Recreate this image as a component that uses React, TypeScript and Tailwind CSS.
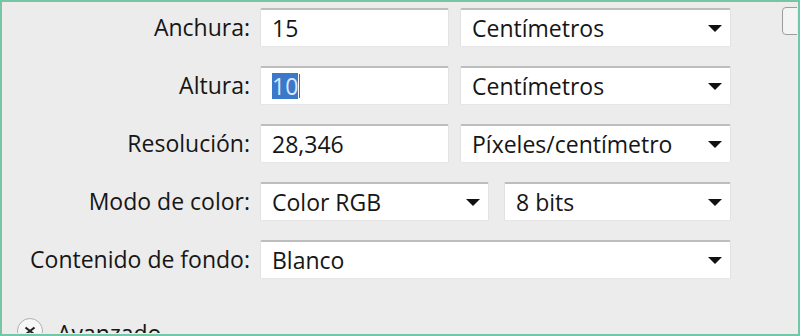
import React from "react";

const font = { fontFamily: '"Open Sans", "Noto Sans", sans-serif' };

function Arrow() {
  return (
    <svg width="14" height="7" viewBox="0 0 14 7" className="shrink-0">
      <path d="M0 0 H14 L7 7 Z" fill="#111" />
    </svg>
  );
}

function Field({ children, className = "" }: { children: React.ReactNode; className?: string }) {
  return (
    <div
      className={`h-[39px] bg-white border-t-2 border-t-[#bdbdbd] border-x border-x-[#e2e2e2] border-b border-b-[#e6e6e6] rounded-[2px] flex items-center pl-[11px] pr-2 text-[23px] text-[#161616] ${className}`}
    >
      {children}
    </div>
  );
}

function Select({ value, className = "" }: { value: string; className?: string }) {
  return (
    <Field className={`justify-between ${className}`}>
      <span>{value}</span>
      <Arrow />
    </Field>
  );
}

function Row({ label, children }: { label: string; children: React.ReactNode }) {
  return (
    <div className="flex items-center h-[40px]">
      <div className="w-[250px] text-right text-[23px] text-[#161616] whitespace-nowrap">{label}</div>
      <div className="flex items-center ml-[10px] gap-[11px]">{children}</div>
    </div>
  );
}

export default function App() {
  return (
    <div className="relative w-[800px] h-[336px] overflow-hidden bg-[#ececec]" style={font}>
      <div className="flex h-full">
        <div className="w-[744px] shrink-0 flex flex-col pt-[8px] gap-[19px]">
          <Row label="Anchura:">
            <Field className="w-[189px]">15</Field>
            <Select value="Centímetros" className="w-[271px]" />
          </Row>
          <Row label="Altura:">
            <Field className="w-[189px]">
              <span className="bg-[#3b78c9] text-[#d8e8ff] leading-[26px]">10</span>
              <span className="w-[1px] h-[24px] bg-[#c04040] ml-[1px]" />
            </Field>
            <Select value="Centímetros" className="w-[271px]" />
          </Row>
          <Row label="Resolución:">
            <Field className="w-[189px]">28,346</Field>
            <Select value="Píxeles/centímetro" className="w-[271px]" />
          </Row>
          <Row label="Modo de color:">
            <Select value="Color RGB" className="w-[229px]" />
            <Select value="8 bits" className="w-[227px] ml-[4px]" />
          </Row>
          <Row label="Contenido de fondo:">
            <Select value="Blanco" className="w-[471px]" />
          </Row>
          <div className="flex items-start gap-[14px] pl-[17px] mt-[20px]">
            <div className="w-[26px] h-[26px] rounded-full border border-[#b0b0b0] bg-[#f7f7f7] flex items-center justify-center shrink-0">
              <svg width="12" height="10" viewBox="0 0 12 10">
                <path d="M1.5 1.5 L10.5 8.5 M10.5 1.5 L1.5 8.5" stroke="#222" strokeWidth="2.2" fill="none" />
              </svg>
            </div>
            <span className="text-[23px] text-[#161616] leading-[30px]">Avanzado</span>
          </div>
        </div>
        <div className="w-[2px] bg-[#a3a3a3]" />
        <div className="w-[1px] bg-[#fafafa]" />
        <div className="flex-1 pl-[38px] pt-[7px]">
          <div className="w-[30px] h-[28px] rounded-[4px] border border-[#9c9c9c] bg-[#f4f4f4]" />
        </div>
      </div>
      <div className="pointer-events-none absolute inset-0 border-2 border-[#72c7a6]" />
      <div className="pointer-events-none absolute inset-[2px] border border-[#f6e9ec]" />
    </div>
  );
}
